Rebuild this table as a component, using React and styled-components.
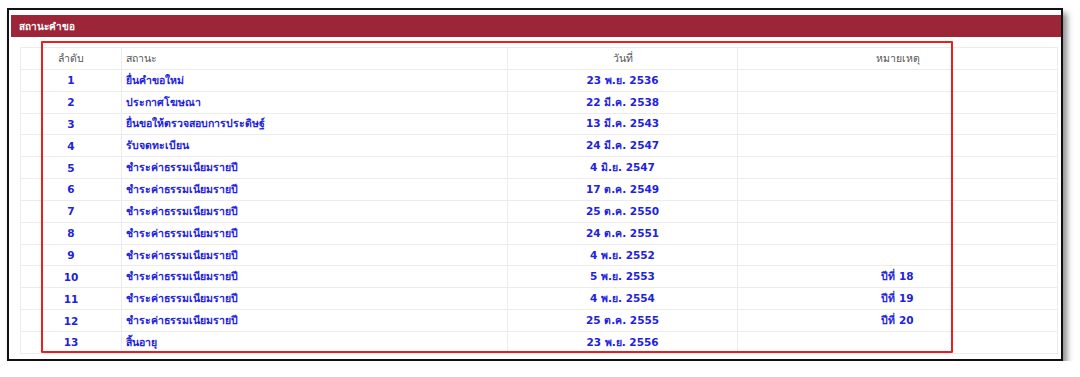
import React from 'react';
import styled, { createGlobalStyle } from 'styled-components';

const GlobalStyle = createGlobalStyle`
    body {
        margin: 0;
        background: #ffffff;
        font-family: Tahoma, "DejaVu Sans", "Noto Sans", sans-serif;
    }
`;

const Frame = styled.div`
    position: relative;
    margin: 8px 0 0 7px;
    width: 1056px;
    height: 353px;
    box-sizing: border-box;
    border: 2px solid #111;
    padding: 5px 0 6px 2px;
    background: #fff;
    box-shadow: 4px 5px 6px rgba(0, 0, 0, 0.45);
`;

const TitleBar = styled.div`
    height: 22px;
    display: flex;
    align-items: center;
    padding-left: 8px;
    background: #9c2537;
    color: #fff;
    font-size: 10px;
    font-weight: bold;
`;

const Body = styled.div`
    padding: 10px 3px 0 9px;
`;

const Table = styled.table`
    width: 1037px;
    table-layout: fixed;
    border-collapse: collapse;
    font-size: 10.5px;
`;

const Cell = styled.td`
    height: 21.85px;
    padding: 0 4px;
    box-sizing: border-box;
    border: 1px solid #ececec;
    text-align: ${p => p.$align || 'center'};
    color: ${p => (p.$head ? '#555' : '#2222dd')};
    font-weight: ${p => (p.$head ? 'normal' : 'bold')};
    white-space: nowrap;
`;

const Highlight = styled.div`
    position: absolute;
    left: 32px;
    top: 31px;
    width: 912px;
    height: 312px;
    box-sizing: border-box;
    border: 2px solid #e8211f;
    border-radius: 1px;
    pointer-events: none;
`;

const rows = [
    ['1', 'ยื่นคำขอใหม่', '23 พ.ย. 2536', ''],
    ['2', 'ประกาศโฆษณา', '22 มี.ค. 2538', ''],
    ['3', 'ยื่นขอให้ตรวจสอบการประดิษฐ์', '13 มี.ค. 2543', ''],
    ['4', 'รับจดทะเบียน', '24 มี.ค. 2547', ''],
    ['5', 'ชำระค่าธรรมเนียมรายปี', '4 มิ.ย. 2547', ''],
    ['6', 'ชำระค่าธรรมเนียมรายปี', '17 ต.ค. 2549', ''],
    ['7', 'ชำระค่าธรรมเนียมรายปี', '25 ต.ค. 2550', ''],
    ['8', 'ชำระค่าธรรมเนียมรายปี', '24 ต.ค. 2551', ''],
    ['9', 'ชำระค่าธรรมเนียมรายปี', '4 พ.ย. 2552', ''],
    ['10', 'ชำระค่าธรรมเนียมรายปี', '5 พ.ย. 2553', 'ปีที่ 18'],
    ['11', 'ชำระค่าธรรมเนียมรายปี', '4 พ.ย. 2554', 'ปีที่ 19'],
    ['12', 'ชำระค่าธรรมเนียมรายปี', '25 ต.ค. 2555', 'ปีที่ 20'],
    ['13', 'สิ้นอายุ', '23 พ.ย. 2556', ''],
];

export default function App() {
    return (
        <>
            <GlobalStyle />
            <Frame>
                <TitleBar>สถานะคำขอ</TitleBar>
                <Body>
                    <Table>
                        <colgroup>
                            <col style={{ width: 101 }} />
                            <col style={{ width: 386 }} />
                            <col style={{ width: 230 }} />
                            <col style={{ width: 320 }} />
                        </colgroup>
                        <thead>
                            <tr>
                                <Cell as="th" $head>ลำดับ</Cell>
                                <Cell as="th" $head $align="left">สถานะ</Cell>
                                <Cell as="th" $head>วันที่</Cell>
                                <Cell as="th" $head>หมายเหตุ</Cell>
                            </tr>
                        </thead>
                        <tbody>
                            {rows.map(r => (
                                <tr key={r[0]}>
                                    <Cell>{r[0]}</Cell>
                                    <Cell $align="left">{r[1]}</Cell>
                                    <Cell>{r[2]}</Cell>
                                    <Cell>{r[3]}</Cell>
                                </tr>
                            ))}
                        </tbody>
                    </Table>
                </Body>
                <Highlight />
            </Frame>
        </>
    );
}
